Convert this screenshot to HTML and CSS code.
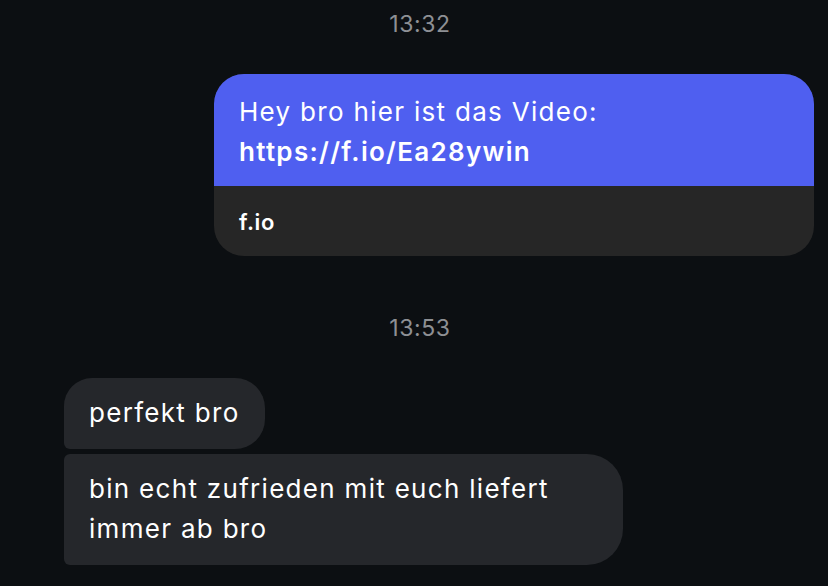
FILE: index.html
```html
<!DOCTYPE html>
<html lang="de">
<head>
    <meta charset="UTF-8">
    <meta name="viewport" content="width=device-width, initial-scale=1.0">
    <title>Chat</title>
    <link rel="stylesheet" href="styles.css">
</head>
<body>
    <div class="chat">
        <div class="time">13:32</div>

        <div class="row row-out">
            <div class="bubble bubble-out">
                <div class="bubble-text">
                    Hey bro hier ist das Video:<br>
                    <span class="link">https://f.io/Ea28ywin</span>
                </div>
                <div class="preview">f.io</div>
            </div>
        </div>

        <div class="time time-gap">13:53</div>

        <div class="group-in">
            <div class="bubble bubble-in first">perfekt bro</div>
            <div class="bubble bubble-in last">bin echt zufrieden mit euch liefert<br>immer ab bro</div>
        </div>
    </div>
</body>
</html>
```

FILE: styles.css
```css
body {
    margin: 0;
    background-color: #0c0f12;
    font-family: 'Inter', 'Liberation Sans', sans-serif;
    color: #fff;
}

.chat {
    display: flex;
    flex-direction: column;
    padding: 12px 14px 0 64px;
}

.time {
    text-align: center;
    font-size: 23px;
    line-height: 24px;
    letter-spacing: 0.6px;
    color: #8e9094;
    margin-left: -38px;
}

.time-gap {
    margin-top: 60px;
}

.row-out {
    display: flex;
    justify-content: flex-end;
    margin-top: 38px;
}

.bubble {
    font-size: 26px;
    line-height: 40px;
    letter-spacing: 1.3px;
}

.bubble-out {
    width: 600px;
    border-radius: 30px;
    overflow: hidden;
    background-color: #262626;
}

.bubble-text {
    background-color: #4f5ff0;
    padding: 18px 25px 14px;
}

.link {
    font-weight: 600;
}

.preview {
    height: 70px;
    display: flex;
    align-items: center;
    padding: 2px 25px 0;
    font-size: 22px;
    font-weight: 600;
    letter-spacing: 0.6px;
    box-sizing: border-box;
}

.group-in {
    display: flex;
    flex-direction: column;
    align-items: flex-start;
    gap: 5px;
    margin-top: 38px;
}

.bubble-in {
    background-color: #25272b;
    padding: 15px 25px 16px;
}

.first {
    border-radius: 28px 30px 30px 6px;
}

.last {
    border-radius: 6px 36px 36px 6px;
    padding-right: 74px;
}
```
